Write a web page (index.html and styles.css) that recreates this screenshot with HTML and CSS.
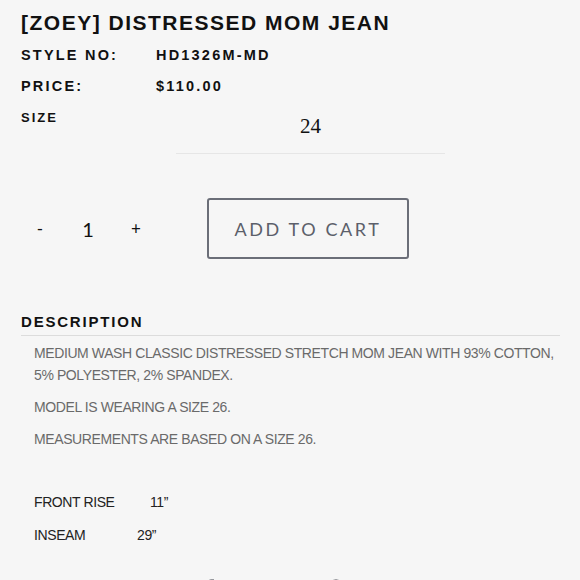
FILE: index.html
```html
<!DOCTYPE html>
<html lang="en">
<head>
    <meta charset="UTF-8">
    <meta name="viewport" content="width=device-width, initial-scale=1.0">
    <title>[ZOEY] Distressed Mom Jean</title>
    <link rel="stylesheet" href="styles.css">
</head>
<body>
    <div class="product">
        <h1 class="product-title">[ZOEY] DISTRESSED MOM JEAN</h1>

        <div class="meta-row">
            <span class="meta-label">STYLE NO:</span>
            <span class="meta-value">HD1326M-MD</span>
        </div>
        <div class="meta-row">
            <span class="meta-label">PRICE:</span>
            <span class="meta-value">$110.00</span>
        </div>

        <div class="size-row">
            <span class="size-label">SIZE</span>
            <div class="size-select">24</div>
        </div>

        <div class="cart-row">
            <div class="qty">
                <button class="qty-btn">-</button>
                <span class="qty-value">1</span>
                <button class="qty-btn">+</button>
            </div>
            <button class="add-to-cart">ADD TO CART</button>
        </div>

        <h2 class="section-title">DESCRIPTION</h2>
        <div class="description">
            <p>MEDIUM WASH CLASSIC DISTRESSED STRETCH MOM JEAN WITH 93% COTTON, 5% POLYESTER, 2% SPANDEX.</p>
            <p>MODEL IS WEARING A SIZE 26.</p>
            <p>MEASUREMENTS ARE BASED ON A SIZE 26.</p>

            <div class="measures">
                <div class="measure"><span class="measure-name rise">FRONT RISE</span><span>11”</span></div>
                <div class="measure"><span class="measure-name inseam">INSEAM</span><span>29”</span></div>
            </div>
        </div>

        <div class="share">
            <svg width="14" height="20" viewBox="0 0 14 20"><path d="M9 20V11h3l.5-3.5H9V5.5c0-1 .3-1.7 1.8-1.7H13V.6C12.6.5 11.5.4 10.3.4 7.7.4 5.9 2 5.9 4.9v2.6H3V11h2.9v9z" fill="#3a3d46"/></svg>
            <svg width="18" height="20" viewBox="0 0 18 20"><path d="M9 .5C4 .5 1.5 4 1.5 7c0 1.8.7 3.4 2.2 4 .2.1.5 0 .5-.3l.2-.9c.1-.3 0-.4-.2-.6-.4-.5-.7-1.2-.7-2.1 0-2.7 2-5.1 5.3-5.1 2.9 0 4.5 1.8 4.5 4.1 0 3.1-1.4 5.7-3.4 5.7-1.1 0-2-.9-1.7-2.1.3-1.4 1-2.9 1-3.900 0-.9-.5-1.6-1.5-1.6-1.2 0-2.1 1.2-2.1 2.8 0 1 .3 1.7.3 1.7l-1.4 5.9c-.4 1.7-.1 3.9 0 4.1 0 .1.2.2.3.1.1-.1 1.4-1.8 1.9-3.4l.7-2.8c.4.7 1.5 1.4 2.7 1.4 3.5 0 5.9-3.2 5.9-7.5C16.5 3.6 13.7.5 9 .5z" fill="#3a3d46"/></svg>
        </div>
    </div>
</body>
</html>
```

FILE: styles.css
```css
/* Base */
body {
    margin: 0;
    padding: 0;
    background: #f6f6f6;
    color: #111;
    font-family: 'Liberation Sans', Arial, sans-serif;
}

.product {
    padding: 10px 20px 0 21px;
}

/* Title and meta */
.product-title {
    margin: 0 0 9px;
    font-size: 21px;
    line-height: 26px;
    font-weight: bold;
    letter-spacing: 1.5px;
}

.meta-row {
    display: flex;
    height: 31px;
    align-items: center;
    font-size: 14.5px;
    font-weight: bold;
    letter-spacing: 2.2px;
    margin-top: -6px;
    margin-bottom: 6px;
}

.meta-label {
    width: 135px;
}

/* Size */
.size-row {
    display: flex;
    align-items: flex-start;
    margin-top: 9px;
}

.size-label {
    font-size: 13px;
    font-weight: bold;
    letter-spacing: 2px;
    width: 155px;
}

.size-select {
    width: 269px;
    border-bottom: 1px solid #e6e6e6;
    text-align: center;
    font-family: 'Liberation Serif', 'Times New Roman', serif;
    font-size: 21px;
    line-height: 24px;
    padding: 4px 0 15px;
}

/* Quantity and cart */
.cart-row {
    display: flex;
    align-items: center;
    margin-top: 44px;
}

.qty {
    display: flex;
    align-items: center;
    width: 186px;
}

.qty-btn {
    background: none;
    border: none;
    padding: 0;
    font-family: 'Lato', sans-serif;
    font-size: 17px;
    color: #111;
    width: 20px;
    text-align: center;
    cursor: pointer;
}

.qty-btn:first-child {
    margin-left: 9px;
}

.qty-value {
    font-family: 'Lato', sans-serif;
    font-size: 20px;
    color: #111;
    width: 76px;
    text-align: center;
}

.add-to-cart {
    width: 202px;
    height: 61px;
    background: transparent;
    border: 2px solid #6b6e78;
    border-radius: 3px;
    font-family: 'Lato', sans-serif;
    font-size: 18px;
    letter-spacing: 2.6px;
    color: #5c5f6a;
    cursor: pointer;
}

/* Description */
.section-title {
    margin: 53px 0 0;
    padding-bottom: 4px;
    border-bottom: 1px solid #dcdcdc;
    font-size: 15px;
    line-height: 19px;
    font-weight: bold;
    letter-spacing: 1.8px;
}

.description {
    padding: 6px 0 0 13px;
    font-size: 14px;
    line-height: 22px;
    color: #6a6a6a;
    letter-spacing: -0.4px;
}

.description p {
    margin: 0 0 10px;
}

.measures {
    margin-top: 41px;
    color: #222;
}

.measure {
    display: flex;
    height: 33px;
}

.measure-name.rise {
    width: 116px;
}

.measure-name.inseam {
    width: 103px;
}

/* Share icons */
.share {
    display: flex;
    gap: 112px;
    margin: 22px 0 0 180px;
}
```
